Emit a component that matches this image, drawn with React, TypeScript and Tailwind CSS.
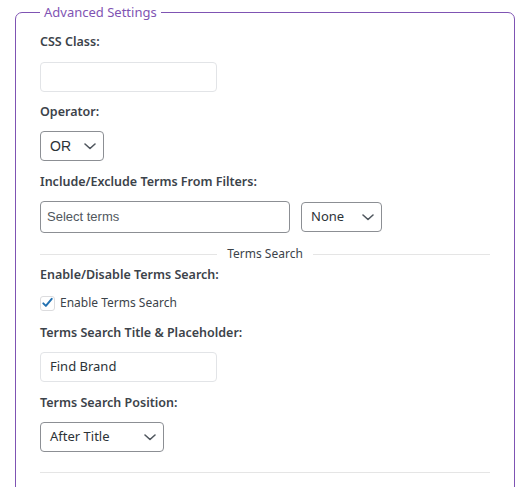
import React from "react";

function Chevron() {
  return (
    <svg width="14" height="10" viewBox="0 0 14 10" className="shrink-0">
      <path d="M2 3l5 4.5L12 3" fill="none" stroke="#50575e" strokeWidth="1.6" strokeLinecap="round" strokeLinejoin="round" />
    </svg>
  );
}

function Select({ value, width, arial }: { value: string; width: string; arial?: boolean }) {
  return (
    <div className={`flex items-center justify-between h-[30px] border border-[#8c8f94] rounded-[4px] pl-[9px] pr-[6px] text-[13px] text-[#2c3338] bg-white ${width}`}>
      <span style={arial ? { fontFamily: '"Liberation Sans", Arial, sans-serif', fontSize: "14px" } : undefined}>{value}</span>
      <Chevron />
    </div>
  );
}

function Label({ children }: { children: React.ReactNode }) {
  return <div className="text-[12.5px] font-semibold leading-[20px] text-[#3c434a]">{children}</div>;
}

export default function App() {
  return (
    <div className="bg-white w-[525px] h-[487px] overflow-hidden" style={{ fontFamily: '"Noto Sans", "Open Sans", sans-serif' }}>
      <fieldset className="ml-[15px] w-[500px] border-[1.5px] border-[#7f54b3] rounded-[7px] px-[24px] pb-[40px]">
        <legend className="ml-0 px-[4px] text-[13px] leading-[24px] text-[#7f54b3]">Advanced Settings</legend>
        <div className="mt-[8px]">
          <Label>CSS Class:</Label>
          <div className="mt-[10px] w-[177px] h-[30px] border border-[#e2e4e7] rounded-[4px] bg-white" />
        </div>
        <div className="mt-[10px]">
          <Label>Operator:</Label>
          <div className="mt-[9px]">
            <Select value="OR" width="w-[64px]" arial />
          </div>
        </div>
        <div className="mt-[11px]">
          <Label>Include/Exclude Terms From Filters:</Label>
          <div className="mt-[9px] flex items-center gap-[11px]">
            <div className="w-[250px] h-[32px] border border-[#8c8f94] rounded-[4px] flex items-center px-[6px] text-[13px] text-[#50575e]" style={{ fontFamily: '"Liberation Sans", Arial, sans-serif' }}>Select terms</div>
            <Select value="None" width="w-[81px]" />
          </div>
        </div>
        <div className="mt-[11px] flex items-center gap-[10px]">
          <div className="flex-1 h-px bg-[#e5e5e5]" />
          <div className="text-[12px] leading-[20px] text-[#3c434a]">Terms Search</div>
          <div className="flex-1 h-px bg-[#e5e5e5]" />
        </div>
        <div className="mt-[1px]">
          <Label>Enable/Disable Terms Search:</Label>
          <div className="mt-[8px] flex items-center gap-[5px]">
            <div className="w-[15px] h-[15px] border border-[#dcdcde] rounded-[3px] flex items-center justify-center bg-white">
              <svg width="14" height="14" viewBox="0 0 20 20">
                <path d="M3.5 10.5l4 4L16.5 3.5" fill="none" stroke="#2271b1" strokeWidth="3" strokeLinecap="round" strokeLinejoin="round" />
              </svg>
            </div>
            <span className="text-[12px] leading-[20px] text-[#3c434a]">Enable Terms Search</span>
          </div>
        </div>
        <div className="mt-[10px]">
          <Label>Terms Search Title &amp; Placeholder:</Label>
          <div className="mt-[9px] w-[177px] h-[30px] border border-[#e2e4e7] rounded-[4px] flex items-center px-[9px] text-[13px] text-[#2c3338]">Find Brand</div>
        </div>
        <div className="mt-[11px]">
          <Label>Terms Search Position:</Label>
          <div className="mt-[9px]">
            <Select value="After Title" width="w-[124px]" />
          </div>
        </div>
        <div className="mt-[20px] h-px bg-[#e5e5e5]" />
      </fieldset>
    </div>
  );
}
